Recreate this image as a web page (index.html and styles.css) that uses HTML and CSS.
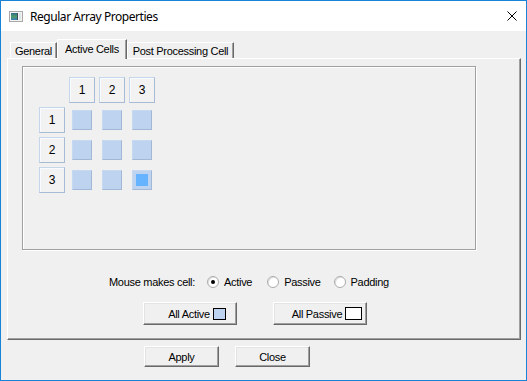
FILE: index.html
```html
<!DOCTYPE html>
<html>
<head>
<meta charset="utf-8">
<link rel="stylesheet" href="styles.css">
</head>
<body>
<div class="window">
  <div class="titlebar">
    <svg class="app-icon" width="14" height="11" viewBox="0 0 14 11">
      <defs>
        <linearGradient id="g" x1="0" y1="0" x2="0" y2="1">
          <stop offset="0" stop-color="#2f6b8a"/>
          <stop offset="0.5" stop-color="#4f9a6a"/>
          <stop offset="1" stop-color="#3a7fb8"/>
        </linearGradient>
      </defs>
      <rect x="0.5" y="0.5" width="13" height="10" fill="#f4f4f4" stroke="#a8a8a8"/>
      <rect x="2" y="2" width="6" height="7" fill="url(#g)"/>
      <rect x="8" y="2" width="1" height="7" fill="#3a4a5a"/>
      <rect x="10" y="2" width="2" height="7" fill="#dfe6ea"/>
    </svg>
    <span class="title">Regular Array Properties</span>
    <svg class="close-x" width="10" height="10" viewBox="0 0 10 10">
      <path d="M0.5 0.5 L9.5 9.5 M9.5 0.5 L0.5 9.5" stroke="#000" stroke-width="1" fill="none"/>
    </svg>
  </div>
  <div class="body">
    <div class="tabstrip">
      <div class="tab tab-general">General</div>
      <div class="tab tab-active">Active Cells</div>
      <div class="tab tab-post">Post Processing Cell</div>
    </div>
    <div class="panel">
      <div class="group">
        <div class="grid">
          <div class="blank"></div>
          <div class="hdr">1</div>
          <div class="hdr">2</div>
          <div class="hdr">3</div>

          <div class="hdr">1</div>
          <div class="slot"><div class="cell"></div></div>
          <div class="slot"><div class="cell"></div></div>
          <div class="slot"><div class="cell"></div></div>

          <div class="hdr">2</div>
          <div class="slot"><div class="cell"></div></div>
          <div class="slot"><div class="cell"></div></div>
          <div class="slot"><div class="cell"></div></div>

          <div class="hdr">3</div>
          <div class="slot"><div class="cell"></div></div>
          <div class="slot"><div class="cell"></div></div>
          <div class="slot"><div class="cell cell-selected"><div class="cell-dot"></div></div></div>
        </div>
      </div>
      <div class="radiorow">
        <span class="rlabel">Mouse makes cell:</span>
        <span class="radio checked"></span><span class="opt opt-active">Active</span>
        <span class="radio"></span><span class="opt opt-passive">Passive</span>
        <span class="radio"></span><span class="opt">Padding</span>
      </div>
      <div class="allrow">
        <div class="btn btn-all">All Active <span class="swatch swatch-blue"></span></div>
        <div class="btn btn-all">All Passive <span class="swatch swatch-white"></span></div>
      </div>
    </div>
    <div class="bottomrow">
      <div class="btn btn-bottom">Apply</div>
      <div class="btn btn-bottom">Close</div>
    </div>
  </div>
</div>
</body>
</html>
```
FILE: styles.css
```css
html, body {
  margin: 0;
  padding: 0;
  background: #f0f0f0;
}
.window {
  width: 527px;
  height: 381px;
  box-sizing: border-box;
  border: 1px solid #1883d7;
  background: #f0f0f0;
  font-family: "Liberation Sans", Arial, sans-serif;
  font-size: 11px;
  letter-spacing: -0.3px;
  color: #000;
  display: flex;
  flex-direction: column;
}
.titlebar {
  height: 30px;
  background: #fff;
  display: flex;
  align-items: center;
  padding-left: 8px;
  padding-right: 9px;
  flex: none;
}
.app-icon {
  flex: none;
}
.title {
  font-family: "Noto Sans", "Open Sans", sans-serif;
  font-size: 12px;
  letter-spacing: -0.45px;
  margin-left: 7px;
  flex: 1;
  color: #000;
}
.close-x {
  flex: none;
}
.body {
  padding: 8px 5px 0 6px;
  display: flex;
  flex-direction: column;
}
.tabstrip {
  display: flex;
  align-items: flex-end;
  height: 19px;
  padding-left: 3px;
  position: relative;
  z-index: 2;
}
.tab {
  box-sizing: border-box;
  height: 16px;
  border-top: 1px solid #fff;
  border-left: 1px solid #fff;
  border-right: 1px solid #696969;
  box-shadow: inset -1px 0 0 #a0a0a0;
  background: #f0f0f0;
  display: flex;
  align-items: center;
  justify-content: center;
  padding-top: 1px;
}
.tab-general { width: 47px; }
.tab-active {
  width: 70px;
  height: 20px;
  margin-bottom: -1px;
  padding-bottom: 3px;
}
.tab-post { width: 107px; }
.panel {
  box-sizing: border-box;
  height: 282px;
  border-top: 1px solid #fff;
  border-left: 1px solid #fff;
  border-right: 1px solid #696969;
  border-bottom: 1px solid #696969;
  box-shadow: inset -1px -1px 0 #a0a0a0;
  display: flex;
  flex-direction: column;
}
.group {
  box-sizing: border-box;
  width: 454px;
  height: 184px;
  margin: 7px 0 0 14px;
  border: 1px solid #a0a0a0;
  box-shadow: inset 1px 1px 0 #fff, 1px 1px 0 #fff;
  padding: 10px 0 0 16px;
  flex: none;
}
.grid {
  display: grid;
  grid-template-columns: repeat(4, 26px);
  grid-auto-rows: 26px;
  gap: 4px;
}
.hdr {
  box-sizing: border-box;
  border: 1px solid;
  border-color: #c6d6ea #a7bbd5 #a7bbd5 #c6d6ea;
  box-shadow: inset 1px 1px 0 #f8fbff;
  background: #f2f2f2;
  display: flex;
  align-items: center;
  justify-content: center;
  font-size: 12px;
  letter-spacing: 0;
}
.slot {
  display: flex;
  align-items: center;
  justify-content: center;
}
.cell {
  box-sizing: border-box;
  width: 20px;
  height: 20px;
  background: #bdd3f0;
  border: 1px solid;
  border-color: #c7d9f1 #a2b8d6 #a2b8d6 #c7d9f1;
  display: flex;
  align-items: center;
  justify-content: center;
}
.cell-dot {
  width: 12px;
  height: 12px;
  background: #66b3ff;
}
.radiorow {
  display: flex;
  align-items: center;
  height: 16px;
  margin: 24px 0 0 101px;
  flex: none;
}
.rlabel { margin-right: 12px; }
.radio {
  box-sizing: border-box;
  width: 12px;
  height: 12px;
  border-radius: 50%;
  border: 1px solid #ababab;
  background: #fff;
  box-shadow: inset 1px 1px 0 #e0e0e0;
  display: inline-flex;
  align-items: center;
  justify-content: center;
  margin-right: 5px;
}
.radio.checked::after {
  content: "";
  width: 4px;
  height: 4px;
  border-radius: 50%;
  background: #000;
}
.opt-active { margin-right: 15px; }
.opt-passive { margin-right: 13px; }
.allrow {
  display: flex;
  gap: 36px;
  margin: 12px 0 0 135px;
  flex: none;
}
.btn {
  box-sizing: border-box;
  border: 1px solid;
  border-color: #fff #696969 #696969 #fff;
  box-shadow: inset -1px -1px 0 #a0a0a0, inset 1px 1px 0 #e3e3e3;
  background: #f0f0f0;
  display: flex;
  align-items: center;
  justify-content: center;
}
.btn-all {
  width: 94px;
  height: 23px;
  padding-left: 14px;
}
.swatch {
  display: inline-block;
  box-sizing: border-box;
  border: 1px solid #000;
  margin-left: 3px;
}
.swatch-blue {
  width: 13px;
  height: 12px;
  background: #bdd3f0;
}
.swatch-white {
  width: 17px;
  height: 13px;
  background: #fff;
}
.bottomrow {
  display: flex;
  gap: 16px;
  margin: 6px 0 0 137px;
}
.btn-bottom {
  width: 75px;
  height: 21px;
}
```
